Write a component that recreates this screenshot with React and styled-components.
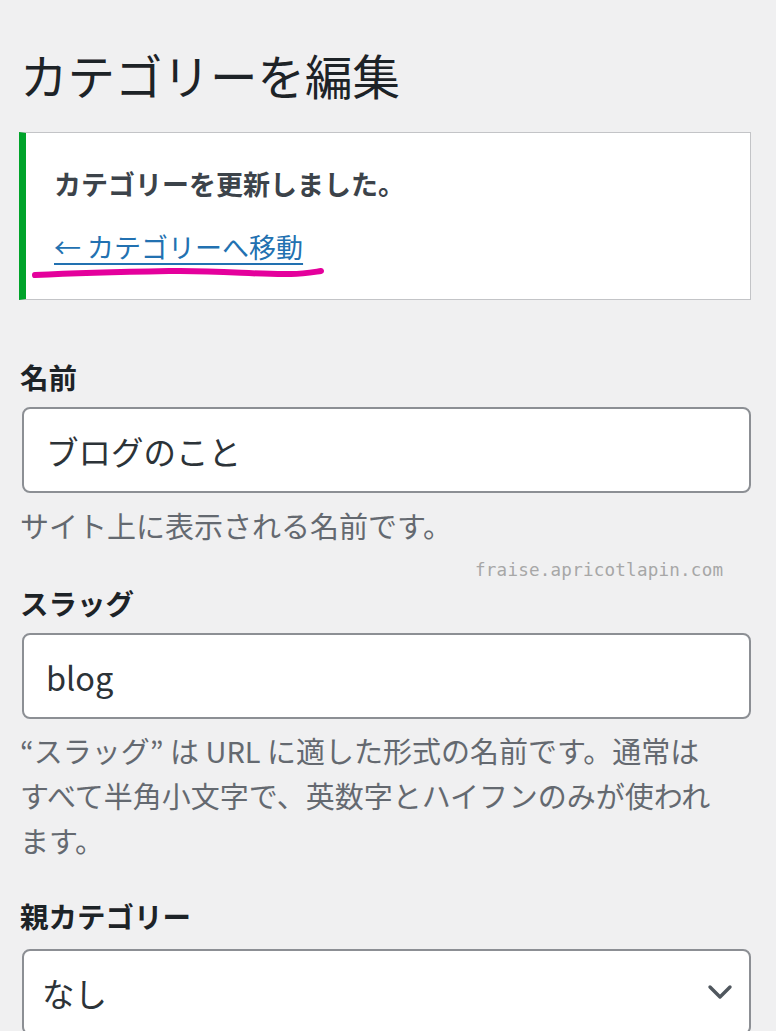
import React from "react"
import styled, { createGlobalStyle } from "styled-components"

const GlobalStyle = createGlobalStyle`
  body {
    margin: 0;
    background: #f0f0f1;
    font-family: "Noto Sans CJK JP", "Noto Sans", sans-serif;
    color: #1d2327;
  }
`

const Page = styled.div`
  position: relative;
  width: 731px;
  padding: 45px 25px 0 20px;
  overflow: hidden;
  height: 986px;
`

const Title = styled.h1`
  margin: 0;
  font-size: 47.5px;
  font-weight: 400;
  line-height: 60px;
  color: #1d2327;
`

const Notice = styled.div`
  position: relative;
  margin: 27px 0 0 -1px;
  background: #fff;
  border: 1px solid #c3c4c7;
  border-left: 7px solid #00a32a;
  padding: 31px 24px 33px 28px;
`

const NoticeText = styled.p`
  margin: 0;
  font-size: 27px;
  line-height: 39px;
  font-weight: 700;
  color: #3c434a;
  & + & {
    margin-top: 24px;
  }
`

const Link = styled.a`
  color: #2271b1;
  font-weight: 400;
  text-decoration: underline;
  text-underline-offset: 5px;
  text-decoration-thickness: 2px;
`

const Scribble = styled.svg`
  position: absolute;
  left: 3px;
  top: 131px;
  pointer-events: none;
`

const Field = styled.div`
  margin-top: ${p => p.$gap}px;
`

const Label = styled.label`
  display: block;
  font-size: 28.5px;
  font-weight: 700;
  line-height: 39px;
  color: #1d2327;
`

const Input = styled.div`
  box-sizing: border-box;
  margin: ${p => p.$top || 11}px 0 0 2px;
  width: 729px;
  height: 86px;
  background: #fff;
  border: 2px solid #8c8f94;
  border-radius: 8px;
  padding: 0 22px;
  display: flex;
  align-items: center;
  justify-content: space-between;
  font-size: 32.5px;
  color: #2c3338;
`

const SelectBox = styled(Input)`
  padding: 0 16px 0 18px;
`

const Help = styled.p`
  margin: ${p => p.$top || 10}px 0 0;
  font-size: 29px;
  line-height: 45px;
  color: #646970;
`

const Watermark = styled.div`
  position: absolute;
  left: 475px;
  top: 560px;
  font-family: "DejaVu Sans Mono", monospace;
  font-size: 17.6px;
  letter-spacing: 0.2px;
  color: #a7a7a7;
`

const Chevron = () => (
  <svg width="26" height="20" viewBox="0 0 26 20">
    <path
      d="M3 5 L13 15 L23 5"
      fill="none"
      stroke="#50575e"
      strokeWidth="3.4"
      strokeLinecap="round"
      strokeLinejoin="round"
    />
  </svg>
)

const App = () => (
  <>
    <GlobalStyle />
    <Page>
      <Title>カテゴリーを編集</Title>
      <Notice>
        <NoticeText>カテゴリーを更新しました。</NoticeText>
        <NoticeText>
          <Link href="#">← カテゴリーへ移動</Link>
        </NoticeText>
        <Scribble width="300" height="20" viewBox="0 0 300 20">
          <path
            d="M6 11 C 50 9, 90 8, 140 7 C 190 6, 230 11, 262 10 C 275 10, 285 8, 292 7"
            fill="none"
            stroke="#e4009c"
            strokeWidth="6"
            strokeLinecap="round"
          />
        </Scribble>
      </Notice>

      <Field $gap={57}>
        <Label>名前</Label>
        <Input>ブログのこと</Input>
        <Help>サイト上に表示される名前です。</Help>
      </Field>

      <Watermark>fraise.apricotlapin.com</Watermark>

      <Field $gap={35}>
        <Label>スラッグ</Label>
        <Input>blog</Input>
        <Help $top={9}>
          “スラッグ” は URL に適した形式の名前です。通常は
          <br />
          すべて半角小文字で、英数字とハイフンのみが使われ
          <br />
          ます。
        </Help>
      </Field>

      <Field $gap={33}>
        <Label>親カテゴリー</Label>
        <SelectBox $top={14}>
          <span>なし</span>
          <Chevron />
        </SelectBox>
      </Field>
    </Page>
  </>
)

export default App
